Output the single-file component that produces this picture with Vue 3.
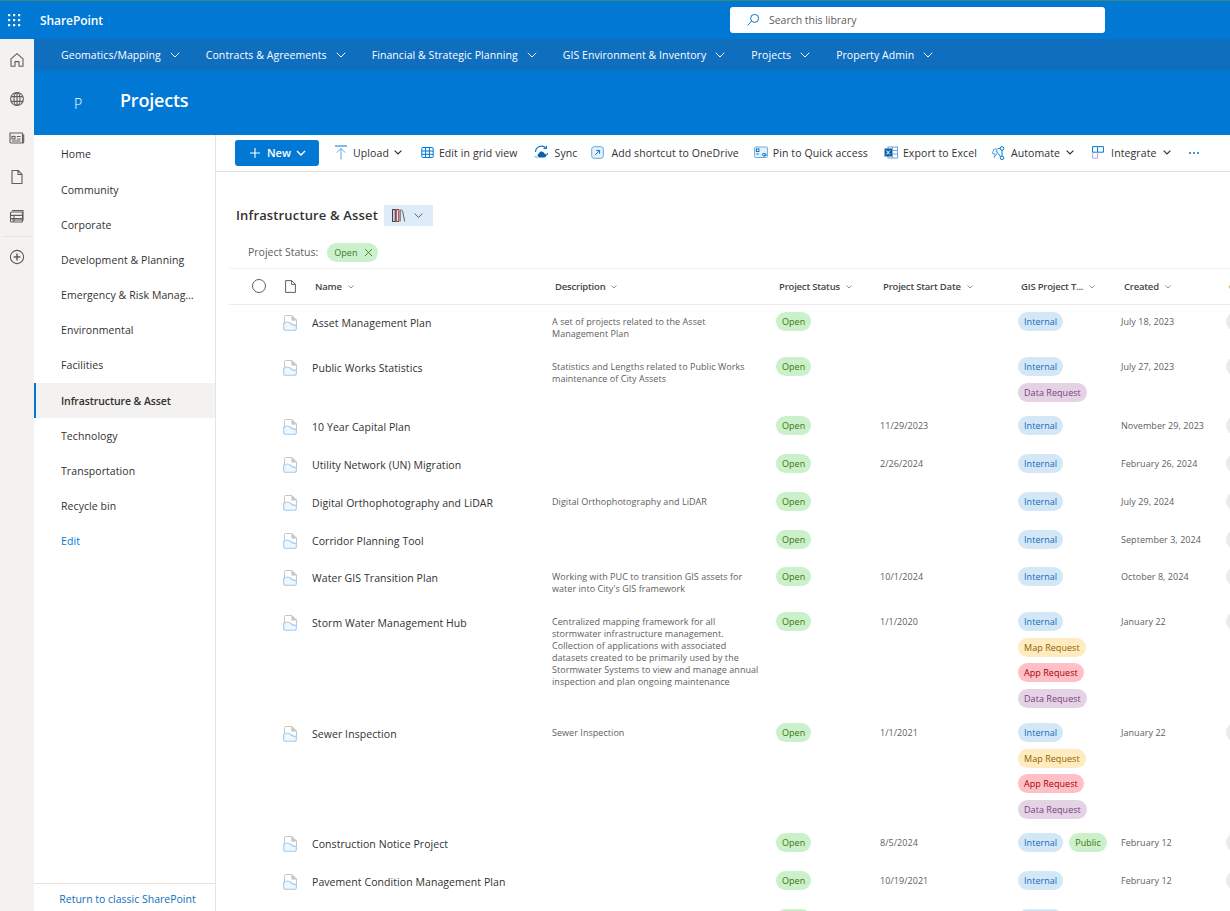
<script setup>
const hubs = [
  'Geomatics/Mapping',
  'Contracts & Agreements',
  'Financial & Strategic Planning',
  'GIS Environment & Inventory',
  'Projects',
  'Property Admin'
]
const navItems = [
  'Home', 'Community', 'Corporate', 'Development & Planning',
  'Emergency & Risk Management', 'Environmental', 'Facilities',
  'Infrastructure & Asset', 'Technology', 'Transportation', 'Recycle bin'
]
const colHeads = [
  { label: 'Project Status', cls: 'h-status' },
  { label: 'Project Start Date', cls: 'h-date' },
  { label: 'GIS Project T...', cls: 'h-gis' },
  { label: 'Created', cls: 'h-created' }
]
const rows = [
  { name: 'Asset Management Plan', desc: ['A set of projects related to the Asset', 'Management Plan'], date: '', tags: ['int'], created: 'July 18, 2023', tall: true },
  { name: 'Public Works Statistics', desc: ['Statistics and Lengths related to Public Works', 'maintenance of City Assets'], date: '', tags: ['int', 'data'], created: 'July 27, 2023' },
  { name: '10 Year Capital Plan', desc: [], date: '11/29/2023', tags: ['int'], created: 'November 29, 2023' },
  { name: 'Utility Network (UN) Migration', desc: [], date: '2/26/2024', tags: ['int'], created: 'February 26, 2024' },
  { name: 'Digital Orthophotography and LiDAR', desc: ['Digital Orthophotography and LiDAR'], date: '', tags: ['int'], created: 'July 29, 2024' },
  { name: 'Corridor Planning Tool', desc: [], date: '', tags: ['int'], created: 'September 3, 2024', short: true },
  { name: 'Water GIS Transition Plan', desc: ['Working with PUC to transition GIS assets for', "water into City's GIS framework"], date: '10/1/2024', tags: ['int'], created: 'October 8, 2024', tall: true },
  { name: 'Storm Water Management Hub', desc: ['Centralized mapping framework for all', 'stormwater infrastructure management.', 'Collection of applications with associated', 'datasets created to be primarily used by the', 'Stormwater Systems to view and manage annual', 'inspection and plan ongoing maintenance'], date: '1/1/2020', tags: ['int', 'map', 'app', 'data'], created: 'January 22', big: true },
  { name: 'Sewer Inspection', desc: ['Sewer Inspection'], date: '1/1/2021', tags: ['int', 'map', 'app', 'data'], created: 'January 22' },
  { name: 'Construction Notice Project', desc: [], date: '8/5/2024', tags: ['int', 'pub'], created: 'February 12' },
  { name: 'Pavement Condition Management Plan', desc: [], date: '10/19/2021', tags: ['int'], created: 'February 12' },
  { name: '', desc: [], date: '', tags: ['int'], created: '', ghost: true }
]
const tagText = { int: 'Internal', data: 'Data Request', map: 'Map Request', app: 'App Request', pub: 'Public' }
</script>

<template>
  <div class="page">
    <header class="suite">
      <svg class="waffle" width="14" height="14" viewBox="0 0 14 14" fill="#fff">
        <g v-for="y in [1, 6, 11]" :key="y">
          <rect v-for="x in [1, 6, 11]" :key="x" :x="x" :y="y" width="2.2" height="2.2" />
        </g>
      </svg>
      <span class="brand">SharePoint</span>
      <div class="search">
        <svg width="14" height="14" viewBox="0 0 14 14" fill="none" stroke="#0078d4" stroke-width="1">
          <circle cx="8.6" cy="5.4" r="4" />
          <path d="M5.6 8.2 1.6 12.4" />
        </svg>
        <span>Search this library</span>
      </div>
    </header>

    <div class="below">
      <aside class="rail">
        <svg class="r-ico" width="16" height="16" viewBox="0 0 16 16" fill="none" stroke="#605e5c" stroke-width="1.1">
          <path d="M2 6.8 8 1.6l6 5.2v7.4h-4V9.6H6v4.6H2z" stroke-linejoin="round" />
        </svg>
        <svg class="r-ico" width="16" height="16" viewBox="0 0 16 16" fill="none" stroke="#605e5c" stroke-width="1.1">
          <circle cx="8" cy="8" r="6.4" />
          <ellipse cx="8" cy="8" rx="3" ry="6.4" />
          <path d="M2 5.6h12M2 10.4h12M8 1.6v12.8" />
        </svg>
        <svg class="r-ico" width="16" height="16" viewBox="0 0 16 16" fill="none" stroke="#605e5c" stroke-width="1.1">
          <path d="M1 3h12.5v10H2a1 1 0 0 1-1-1zM13.5 5h1.2v7a1 1 0 0 1-1 1" />
          <rect x="3" y="6.4" width="3" height="2.6" />
          <path d="M7.8 6.5h3.8M7.8 9h3.8M3 11h8.6" />
        </svg>
        <svg class="r-ico" width="16" height="16" viewBox="0 0 16 16" fill="none" stroke="#605e5c" stroke-width="1.1">
          <path d="M3 1.5h6.2L13 5.3v9.2H3zM9 1.7V5.5h3.8" stroke-linejoin="round" />
        </svg>
        <svg class="r-ico" width="16" height="16" viewBox="0 0 16 16" fill="none" stroke="#605e5c" stroke-width="1.1">
          <path d="M3 2.5h11v9.5H3" />
          <rect x="1.5" y="4" width="12" height="10" rx="1" />
          <path d="M1.5 7.4h12M1.5 10.6h12M5 7.4v6.6" />
        </svg>
        <div class="r-sep"></div>
        <svg class="r-ico" width="16" height="16" viewBox="0 0 16 16" fill="none" stroke="#605e5c" stroke-width="1.1">
          <circle cx="8" cy="8" r="6.6" />
          <path d="M8 4.6v6.8M4.6 8h6.8" stroke-width="1.5" />
        </svg>
      </aside>

      <div class="main">
        <nav class="hub">
          <div v-for="h in hubs" :key="h" class="hub-item">
            <span>{{ h }}</span>
            <svg width="10" height="6" viewBox="0 0 10 6" fill="none" stroke="#fff" stroke-width="1"><path d="m.8.8 4.2 4.2L9.2.8" /></svg>
          </div>
        </nav>
        <div class="site">
          <span class="site-logo">P</span>
          <span class="site-title">Projects</span>
        </div>

        <div class="content">
          <aside class="leftnav">
            <ul class="nav-list">
              <li v-for="n in navItems" :key="n" class="nav-item" :class="{ active: n === 'Infrastructure & Asset' }">
                <span class="nav-text">{{ n }}</span>
              </li>
              <li class="nav-item edit">Edit</li>
            </ul>
            <div class="classic">Return to classic SharePoint</div>
          </aside>

          <section class="lib">
            <div class="cmd">
              <button class="new-btn">
                <svg width="10" height="10" viewBox="0 0 10 10" stroke="#fff" stroke-width="1.1"><path d="M5 0v10M0 5h10" /></svg>
                <span>New</span>
                <svg class="new-chev" width="10" height="6" viewBox="0 0 10 6" fill="none" stroke="#fff" stroke-width="1.4"><path d="m1 1 4 4 4-4" /></svg>
              </button>

              <div class="cmd-item m19">
                <svg width="14" height="15" viewBox="0 0 14 15" fill="none" stroke="#0078d4" stroke-width="1"><path d="M1 1h12" /><path d="M7 3.5V14.5M2.8 7.600 7 3.400l4.200 4.200" stroke="#5ea6e0" /></svg>
                <span>Upload</span>
                <svg class="chev" width="8" height="5" viewBox="0 0 8 5" fill="none" stroke="#323130" stroke-width="1.2"><path d="m.6.6 3.4 3.4L7.4.6" /></svg>
              </div>
              <div class="cmd-item m16">
                <svg width="13" height="13" viewBox="0 0 13 13" fill="none" stroke="#0078d4" stroke-width="1"><rect x=".8" y="1.5" width="11.4" height="10" rx="1.2" /><path d="M.8 5h11.4M.8 8.3h11.4M4.6 1.5v10M8.4 1.5v10" /></svg>
                <span>Edit in grid view</span>
              </div>
              <div class="cmd-item gap6 m14">
                <svg width="15" height="15" viewBox="0 0 15 15" fill="none"><path d="M1.500 7A6 6 0 0 1 12 3.200M13.500 8a6 6 0 0 1-1 2.500" stroke="#0078d4" stroke-width="1.2" /><path d="M9.500 3.600h3V.8" stroke="#0078d4" stroke-width="1" /><path d="M.7 11.800h1.800l1 1.400" stroke="#5ea6e0" /><path d="M5 8.600c.4-1.400 1.500-2 2.600-2 1.200 0 2.200.7 2.500 1.900 1.200 0 2.100.8 2.100 1.900 0 1.200-1 2-2.100 2H5.600c-1.100 0-2-.8-2-1.900 0-1 .6-1.700 1.400-1.900z" fill="#0f5ea8" /></svg>
                <span>Sync</span>
              </div>
              <div class="cmd-item gap7">
                <svg width="13" height="13" viewBox="0 0 13 13" fill="none" stroke="#5ea6e0" stroke-width="1"><rect x=".7" y=".7" width="11.600" height="11.600" rx="2.500" fill="#e6f1fb" /><path d="M4.300 8.800 8.500 4.600M5.200 4.400h3.400v3.400" stroke="#0078d4" /></svg>
                <span>Add shortcut to OneDrive</span>
              </div>
              <div class="cmd-item m16">
                <svg width="14" height="13" viewBox="0 0 14 13" fill="none" stroke="#6fa8dc" stroke-width="1"><rect x=".6" y="1" width="12.800" height="10.500" rx=".8" fill="#e6f1fb" /><rect x="2.400" y="3" width="2.500" height="2.500" fill="#fff" stroke="#0078d4" /><path d="M2.400 8h2.500M8 8.500l2-1.500v1h2v1.500h-2v1z" stroke="#0078d4" /></svg>
                <span>Pin to Quick access</span>
              </div>
              <div class="cmd-item m14">
                <svg width="14" height="13" viewBox="0 0 14 13" fill="none"><rect x="4" y="1" width="9.500" height="11" fill="#fff" stroke="#6fa8dc" /><path d="M4 4.500h9.500M4 8h9.500M8.500 1v11" stroke="#6fa8dc" /><rect x=".5" y="2.500" width="7.500" height="8" fill="#0f5ea8" /><path d="m2.400 4.500 3.500 4M5.900 4.500l-3.500 4" stroke="#fff" /></svg>
                <span>Export to Excel</span>
              </div>
              <div class="cmd-item gap6 m18">
                <svg width="14" height="14" viewBox="0 0 14 14" fill="none" stroke="#0078d4" stroke-width="1"><circle cx="11" cy="2.400" r="1.800" /><circle cx="11" cy="11.800" r="1.800" /><path d="M11 4.200v5.800M9.200 2.400H7M7 7.400l2.600 3.300" /><path d="M3 3h3.400L5 6h2.200l-4 5.500.9-3.800H1.200z" stroke="#5ea6e0" /></svg>
                <span>Automate</span>
                <svg class="chev" width="8" height="5" viewBox="0 0 8 5" fill="none" stroke="#323130" stroke-width="1.2"><path d="m.6.6 3.400 3.400L7.400.6" /></svg>
              </div>
              <div class="cmd-item gap7 m18">
                <svg width="12" height="13" viewBox="0 0 12 13" fill="none" stroke="#0078d4" stroke-width="1"><path d="M.6.600h5v5.600h-5zM5.600.6h5.800v5.600H5.600" /><path d="M.6 6.200v6h5v-6" stroke="#b3a6e0" /></svg>
                <span>Integrate</span>
                <svg class="chev" width="8" height="5" viewBox="0 0 8 5" fill="none" stroke="#323130" stroke-width="1.2"><path d="m.6.6 3.400 3.400L7.400.6" /></svg>
              </div>
              <div class="dots"><i></i><i></i><i></i></div>
            </div>

            <div class="view-head">
              <h2 class="view-title">Infrastructure &amp; Asset</h2>
              <div class="view-switch">
                <svg width="14" height="13" viewBox="0 0 14 13" fill="none" stroke-width="1"><rect x=".6" y=".6" width="2.600" height="11.800" stroke="#323130" /><rect x="4.200" y=".6" width="2.600" height="11.800" stroke="#a4262c" /><path d="M8.200 12.400V1.200c1.500-.7 2.200 0 2.500 1.500l2 9.700" stroke="#605e5c" /></svg>
                <svg width="9" height="5" viewBox="0 0 9 5" fill="none" stroke="#605e5c"><path d="m.6.500 3.900 3.900L8.400.5" /></svg>
              </div>
            </div>

            <div class="filter">
              <span class="filter-label">Project Status:</span>
              <span class="pill pill-open filter-pill">
                Open
                <svg width="9" height="9" viewBox="0 0 9 9" stroke="#3f7a2a" stroke-width=".9"><path d="m1 1 7 7M8 1 1 8" /></svg>
              </span>
            </div>

            <div class="grid head">
              <div class="sel">
                <span class="circle"></span>
                <svg class="head-doc" width="11" height="13" viewBox="0 0 11 13" fill="none" stroke="#605e5c" stroke-width="1"><path d="M.6.600h6.200l3.600 3.600v8.200H.6zM6.600.8v3.600h3.600" /></svg>
              </div>
              <div class="hcell h-name">Name<svg class="sort" width="6" height="4" viewBox="0 0 6 4" fill="none" stroke="#8a8886" stroke-width=".9"><path d="m.5.500 2.500 2.500L5.500.5" /></svg></div>
              <div class="hcell h-desc">Description<svg class="sort" width="6" height="4" viewBox="0 0 6 4" fill="none" stroke="#8a8886" stroke-width=".9"><path d="m.5.500 2.500 2.500L5.500.5" /></svg></div>
              <div v-for="c in colHeads" :key="c.label" class="hcell" :class="c.cls">{{ c.label }}<svg class="sort" width="6" height="4" viewBox="0 0 6 4" fill="none" stroke="#8a8886" stroke-width=".9"><path d="m.5.500 2.500 2.500L5.500.5" /></svg></div>
              <div class="hcell h-by">Created By</div>
            </div>

            <div v-for="(r, i) in rows" :key="i" class="grid row" :class="{ tall: r.tall, short: r.short, big: r.big }">
              <div class="sel">
                <svg v-if="!r.ghost" class="row-doc" width="14" height="16" viewBox="0 0 14 16" fill="none">
                  <path d="M1.500 9V1.500a1 1 0 0 1 1-1H9L13.500 5v6" fill="#fff" stroke="#c8c6c4" />
                  <path d="M8.800.7V5.200h4.500z" fill="#c8c6c4" stroke="#c8c6c4" stroke-width=".7" />
                  <path d="M.7 8.500c3-2.400 5-1.800 7 0 2 1.700 3.800 2.300 5.600 1.500v3.800a1.500 1.500 0 0 1-1.500 1.500H2.200a1.500 1.500 0 0 1-1.500-1.500z" fill="#eff6fc" stroke="#9ecbf0" stroke-width="1.100" />
                </svg>
              </div>
              <div class="name">{{ r.name }}</div>
              <div class="desc">
                <div v-for="d in r.desc" :key="d">{{ d }}</div>
              </div>
              <div><span class="pill pill-open">Open</span></div>
              <div class="cell-text">{{ r.date }}</div>
              <div class="tags">
                <span v-for="t in r.tags" :key="t" class="pill" :class="'tag-' + t">{{ tagText[t] }}</span>
              </div>
              <div class="cell-text">{{ r.created }}</div>
              <div><span class="pill person"></span></div>
            </div>
          </section>
        </div>
      </div>
    </div>
  </div>
</template>

<style>
html, body { margin: 0; height: 100%; overflow: hidden; background: #fff; }
</style>

<style scoped>
.page {
  width: 1230px;
  height: 911px;
  overflow: hidden;
  display: flex;
  flex-direction: column;
  font-family: "Open Sans", "Noto Sans", sans-serif;
  color: #323130;
  font-size: 11px;
  background: #fff;
}
.suite {
  height: 39px;
  flex: none;
  box-sizing: border-box;
  border-top: 1px solid #3a8a7a;
  background: #0078d4;
  display: flex;
  align-items: center;
  padding-left: 7px;
}
.waffle { flex: none; }
.brand { margin-left: 19px; width: 63px; color: #fff; font-size: 12px; font-weight: 600; letter-spacing: -.08px; white-space: nowrap; }
.search {
  margin-left: 627px;
  width: 375px;
  height: 26px;
  background: #fff;
  border-radius: 3px;
  display: flex;
  align-items: center;
  gap: 9px;
  padding-left: 16px;
  box-sizing: border-box;
  color: #605e5c;
  font-size: 10.5px;
  letter-spacing: -.03px;
}
.below { flex: 1; display: flex; min-height: 0; }
.rail {
  width: 34px;
  flex: none;
  background: #f3f2f1;
  display: flex;
  flex-direction: column;
  align-items: center;
  padding-top: 13px;
  box-sizing: border-box;
}
.r-ico { display: block; flex: none; margin-bottom: 23px; }
.r-sep { width: 29px; height: 1px; background: #e8e6e4; margin: -11px 0 12px; }
.main { flex: 1; min-width: 0; display: flex; flex-direction: column; }
.hub {
  height: 32px;
  flex: none;
  background: #106ebe;
  display: flex;
  align-items: center;
  padding-left: 27px;
  gap: 26px;
  color: #fff;
}
.hub-item { display: flex; align-items: center; gap: 9px; font-size: 10.5px; letter-spacing: .07px; white-space: nowrap; }
.site {
  height: 64px;
  flex: none;
  background: #0078d4;
  display: flex;
  align-items: center;
  color: #fff;
  padding-bottom: 6px;
  box-sizing: border-box;
}
.site-logo { margin-left: 40px; font-size: 14px; width: 46px; padding-top: 6px; font-weight: 300; }
.site-title { font-size: 18px; font-weight: 600; letter-spacing: -.2px; }
.content { flex: 1; display: flex; min-height: 0; }
.leftnav {
  width: 182px;
  flex: none;
  box-sizing: border-box;
  border-right: 1px solid #e6e4e2;
  display: flex;
  flex-direction: column;
  justify-content: space-between;
}
.nav-list { list-style: none; margin: 0; padding: 1.8px 0 0; }
.nav-item {
  height: 35.18px;
  display: flex;
  align-items: center;
  padding-left: 27px;
  font-size: 10.5px;
  box-sizing: border-box;
  color: #323130;
  letter-spacing: .08px;
}
.nav-text { width: 136px; overflow: hidden; white-space: nowrap; text-overflow: ellipsis; }
.nav-item.active { background: #f3f2f1; box-shadow: inset 2px 0 0 #0078d4; font-weight: 600; letter-spacing: -.1px; }
.nav-item.edit { color: #0078d4; }
.classic {
  height: 28px;
  flex: none;
  box-sizing: border-box;
  padding-left: 6px;
  border-top: 1px solid #e6e4e2;
  color: #106ebe;
  font-size: 10.5px;
  text-align: center;
  line-height: 30px;
}
.lib { flex: 1; min-width: 0; overflow: hidden; }
.cmd {
  height: 37px;
  box-sizing: border-box;
  border-bottom: 1px solid #e1dfdd;
  display: flex;
  align-items: center;
  padding: 0 0 1px 19px;
  white-space: nowrap;
}
.new-btn {
  width: 84px;
  height: 26px;
  background: #0078d4;
  border: 0;
  border-radius: 3px;
  color: #fff;
  font: 600 11px "Open Sans", sans-serif;
  display: flex;
  align-items: center;
  gap: 7px;
  margin-right: 15px;
  padding: 0 0 0 15px;
  box-sizing: border-box;
}
.new-chev { margin-left: -2px; }
.cmd-item { display: flex; align-items: center; gap: 5px; font-size: 10.5px; letter-spacing: .1px; margin-right: 15px; flex: none; }
.cmd-item.gap6 { gap: 6px; }
.cmd-item.gap7 { gap: 7px; }
.cmd-item.m14 { margin-right: 14px; }
.cmd-item.m16 { margin-right: 16px; }
.cmd-item.m18 { margin-right: 18px; }
.cmd-item.m19 { margin-right: 19px; }
.dots { display: flex; gap: 2px; }
.dots i { width: 2px; height: 2px; border-radius: 50%; background: #0078d4; }
.view-head { display: flex; align-items: center; height: 22px; margin: 32px 0 0 20px; }
.view-title { margin: 0; font-size: 13px; font-weight: 600; color: #323130; letter-spacing: .15px; white-space: nowrap; }
.view-switch {
  margin-left: 6px;
  width: 49px;
  height: 21px;
  background: #deecf9;
  display: flex;
  align-items: center;
  gap: 8px;
  padding-left: 8px;
  box-sizing: border-box;
}
.filter {
  height: 30px;
  margin: 11px 0 0 13px;
  padding: 0 0 1px 19px;
  display: flex;
  align-items: center;
  gap: 9px;
  color: #605e5c;
  font-size: 10.5px;
  border-bottom: 1px solid #f3f2f1;
}
.grid {
  display: grid;
  grid-template-columns: 96px 240px 224px 104px 138px 103px 105px 40px;
  min-width: 1050px;
}
.head {
  height: 36px;
  margin-left: 13px;
  grid-template-columns: 83px 240px 224px 104px 138px 103px 105px 40px;
  align-items: center;
  border-bottom: 1px solid #edebe9;
  box-sizing: border-box;
}
.sel { position: relative; }
.head .sel { height: 100%; }
.circle {
  position: absolute;
  left: 23px;
  top: 10px;
  width: 12px;
  height: 12px;
  border: 1px solid #605e5c;
  border-radius: 50%;
}
.head-doc { position: absolute; left: 56px; top: 11px; }
.hcell {
  font-size: 9.5px;
  font-weight: 600;
  color: #484644;
  padding-left: 3px;
  white-space: nowrap;
  letter-spacing: -.2px;
}
.sort { margin-left: 6px; vertical-align: 1px; }
.h-by { overflow: hidden; }
.row { min-height: 38px; box-sizing: border-box; padding: 7px 0; }
.row.tall { min-height: 45px; }
.row.short { min-height: 37px; }
.row.big { min-height: 111px; }
.row-doc { position: absolute; left: 67px; top: 3px; }
.name { font-size: 10.5px; line-height: 19px; letter-spacing: .07px; white-space: nowrap; color: #323130; padding-top: 2px; }
.desc { font-size: 9px; line-height: 12px; color: #605e5c; white-space: nowrap; padding-top: 4px; letter-spacing: .05px; }
.cell-text { font-size: 9px; line-height: 19px; color: #605e5c; white-space: nowrap; letter-spacing: .05px; }
.pill {
  display: inline-block;
  height: 19px;
  line-height: 19px;
  border-radius: 10px;
  padding: 0 6px;
  font-size: 9px;
  white-space: nowrap;
  box-sizing: border-box;
  vertical-align: top;
  letter-spacing: .05px;
}
.pill.filter-pill { display: inline-flex; align-items: center; gap: 6px; padding: 0 5px 0 7px; color: #3f7a2a; }
.pill-open { background: #caf0cc; color: #437406; }
.tags { display: flex; flex-wrap: wrap; gap: 6.7px 6px; align-content: flex-start; padding-bottom: .3px; }
.tag-int { background: #d4e7f6; color: #0f6cbd; }
.tag-pub { background: #caf0cc; color: #437406; }
.tag-map { background: #ffebc0; color: #8f6200; }
.tag-app { background: #ffbfc7; color: #a80000; }
.tag-data { background: #e3d3e4; color: #7e3d83; }
.person { background: #edebe9; width: 40px; }
</style>
